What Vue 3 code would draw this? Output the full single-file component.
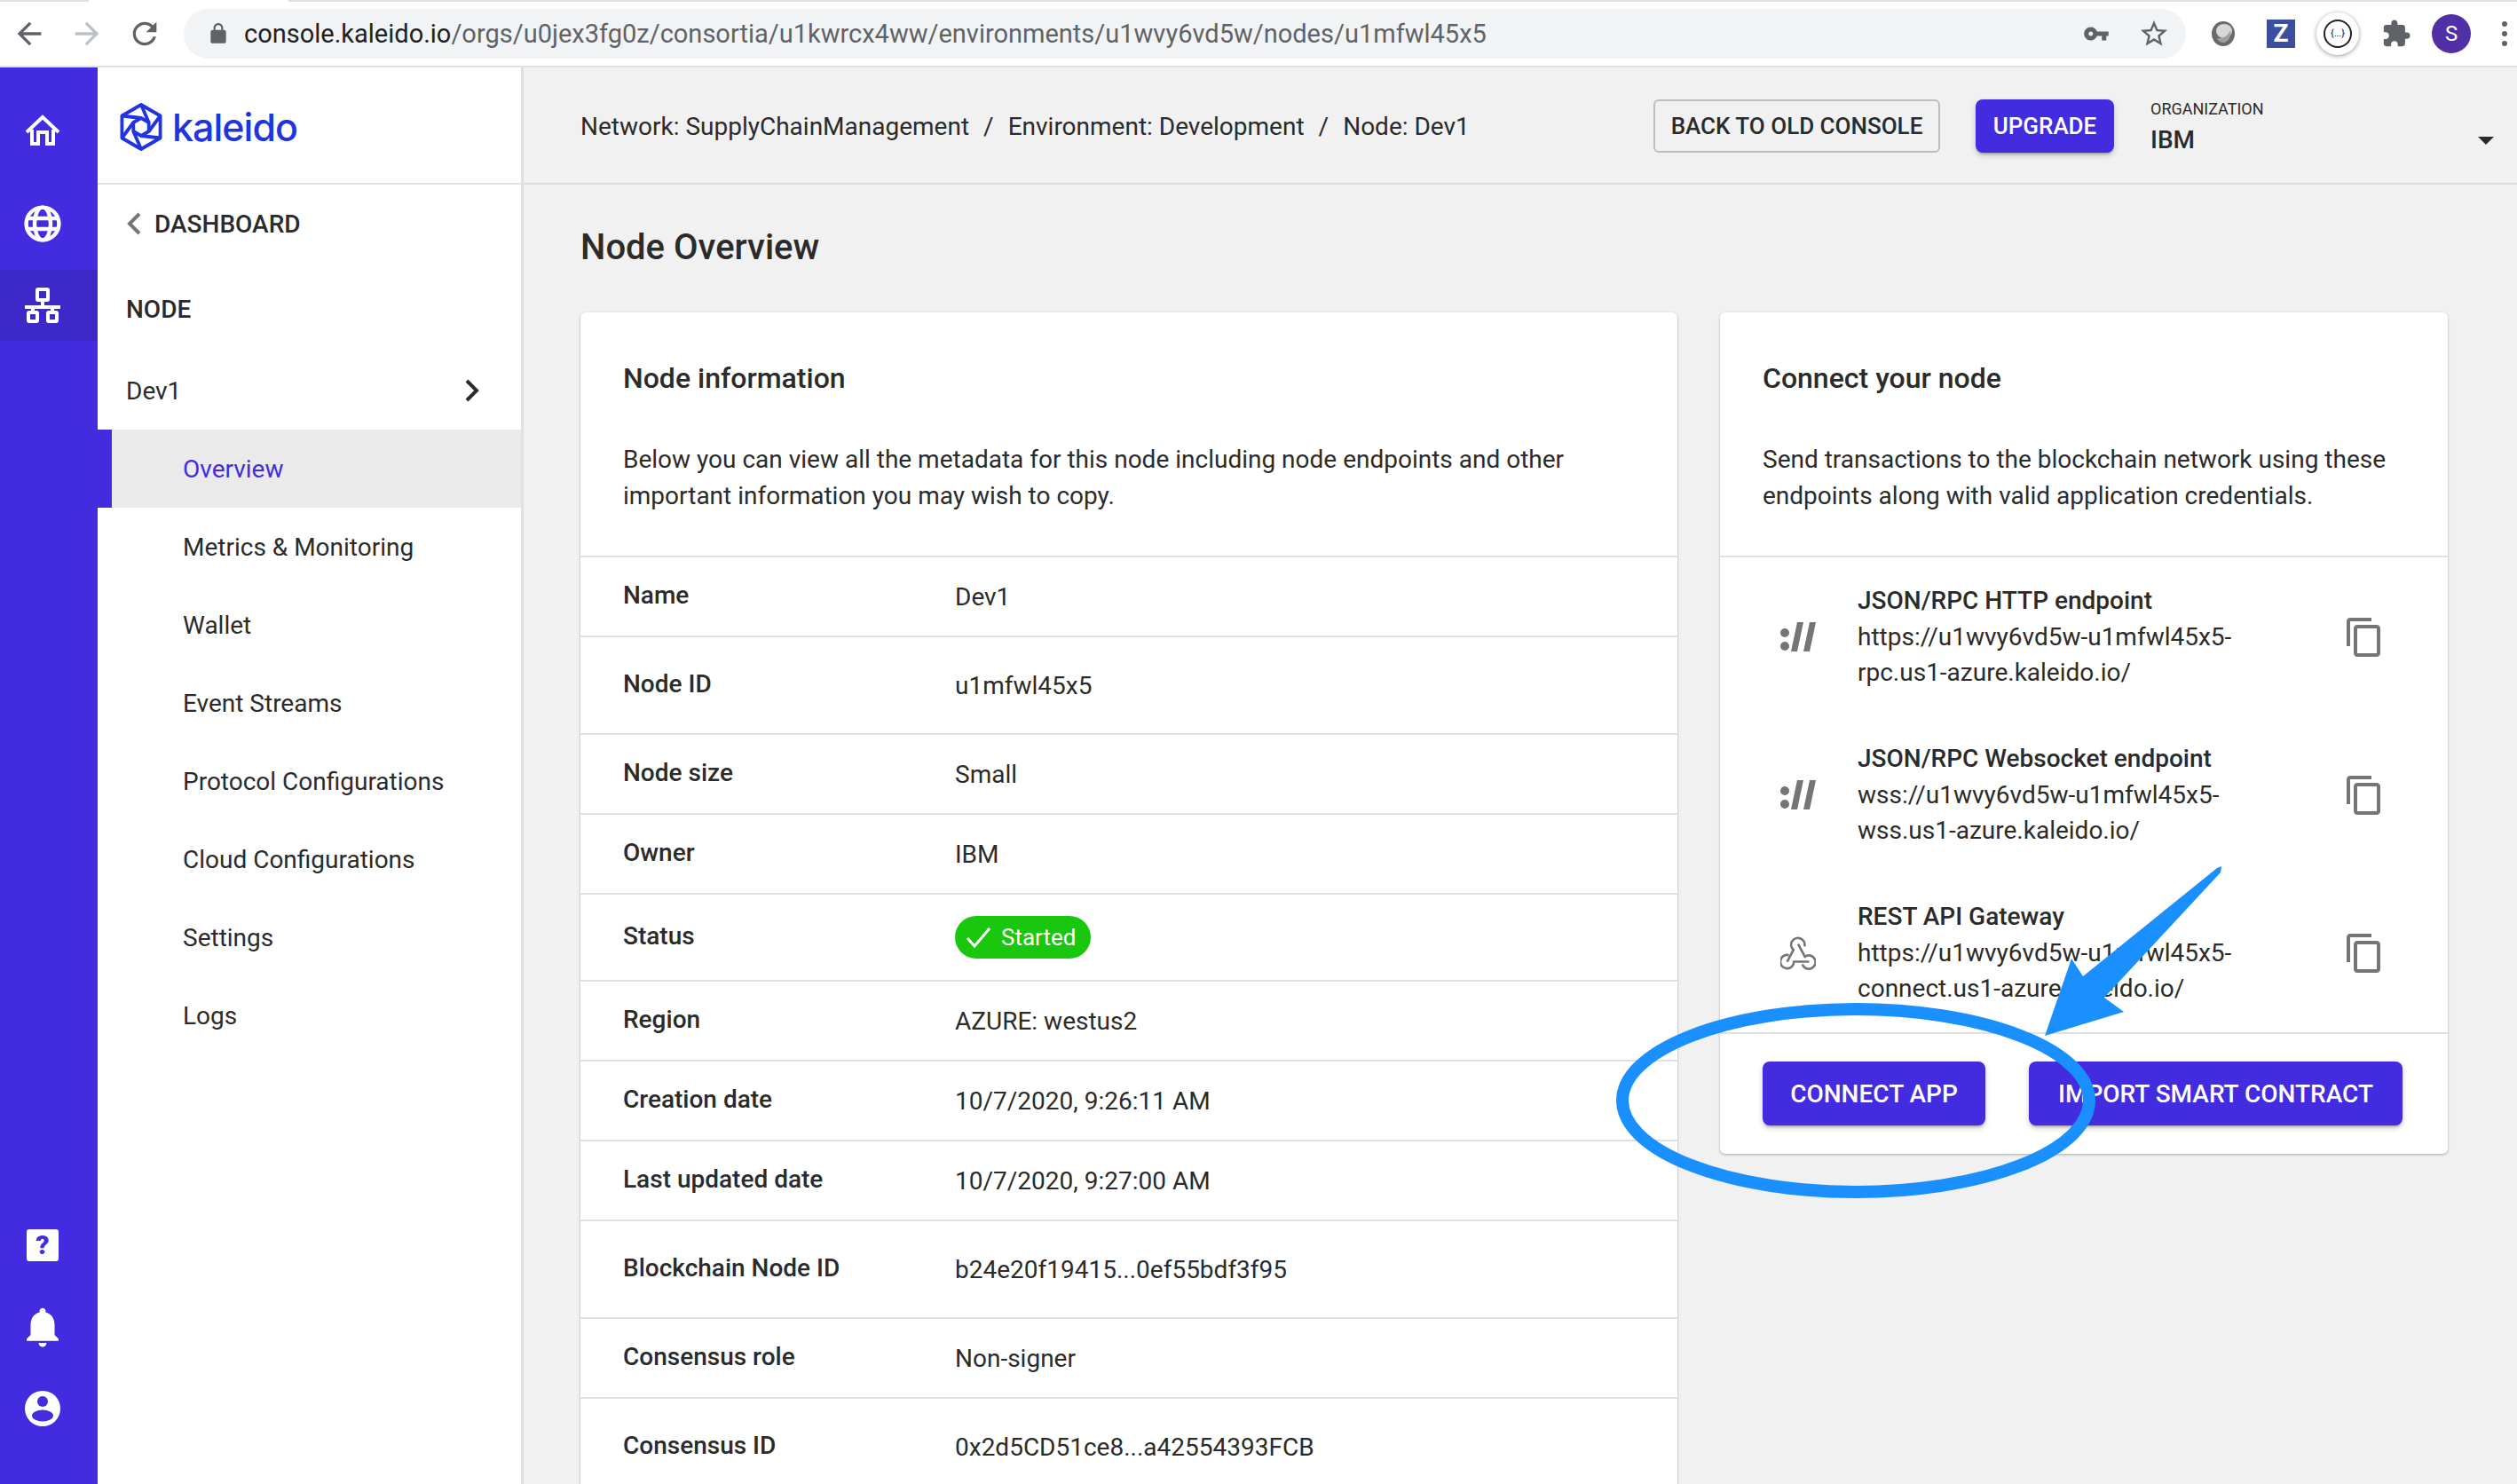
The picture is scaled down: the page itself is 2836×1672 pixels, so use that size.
<template>
  <div class="page">
    <!-- browser toolbar -->
    <div class="chrome">
      <div class="tabline"></div>
      <div class="toolbar">
        <svg class="nav" viewBox="0 0 24 24"><path fill="#5f6368" d="M20 11H7.83l5.59-5.59L12 4l-8 8 8 8 1.41-1.41L7.83 13H20v-2z"/></svg>
        <svg class="nav" viewBox="0 0 24 24"><path fill="#bdc1c6" d="M4 11h12.17l-5.59-5.59L12 4l8 8-8 8-1.41-1.41L16.17 13H4v-2z"/></svg>
        <svg class="nav" viewBox="0 0 24 24"><path fill="#5f6368" d="M17.65 6.35C16.2 4.9 14.21 4 12 4c-4.42 0-7.99 3.58-7.99 8s3.57 8 7.99 8c3.73 0 6.84-2.55 7.73-6h-2.08c-.82 2.33-3.04 4-5.65 4-3.31 0-6-2.69-6-6s2.69-6 6-6c1.66 0 3.14.69 4.22 1.78L13 11h7V4l-2.35 2.35z"/></svg>
        <div class="omnibox">
          <svg class="lock" viewBox="0 0 24 24"><path fill="#5f6368" d="M18 8h-1V6c0-2.76-2.24-5-5-5S7 3.24 7 6v2H6c-1.1 0-2 .9-2 2v10c0 1.1.9 2 2 2h12c1.1 0 2-.9 2-2V10c0-1.1-.9-2-2-2zM9 6c0-1.66 1.34-3 3-3s3 1.34 3 3v2H9V6z"/></svg>
          <span class="url"><b>console.kaleido.io</b>/orgs/u0jex3fg0z/consortia/u1kwrcx4ww/environments/u1wvy6vd5w/nodes/u1mfwl45x5</span>
          <svg class="key" viewBox="0 0 24 24"><path fill="#5f6368" d="M12.65 10C11.83 7.67 9.61 6 7 6c-3.31 0-6 2.69-6 6s2.69 6 6 6c2.61 0 4.83-1.67 5.65-4H17v4h4v-4h2v-4H12.65zM7 14c-1.1 0-2-.9-2-2s.9-2 2-2 2 .9 2 2-.9 2-2 2z"/></svg>
          <svg class="star" viewBox="0 0 24 24"><path fill="#5f6368" d="M22 9.24l-7.19-.62L12 2 9.19 8.63 2 9.24l5.46 4.73L5.82 21 12 17.27 18.18 21l-1.63-7.03L22 9.24zM12 15.4l-3.76 2.27 1-4.28-3.32-2.88 4.38-.38L12 6.1l1.71 4.04 4.38.38-3.32 2.88 1 4.28L12 15.4z"/></svg>
        </div>
        <div class="extensions">
          <svg class="ext-orb" viewBox="0 0 32 32"><ellipse cx="16" cy="16" rx="13" ry="14" fill="#6a6a6a"/><ellipse cx="17" cy="13" rx="9" ry="8" fill="#d8d8d8"/><path fill="#a0a0a0" d="M9 21c6 1 12-2 15-9 2 7-3 14-8 14-3 0-6-2-7-5z"/></svg>
          <div class="ext-z">Z</div>
          <div class="ext-json"><span>{...}</span></div>
          <svg class="ext-puzzle" viewBox="0 0 24 24"><path fill="#5f6368" d="M20.5 11H19V7c0-1.1-.9-2-2-2h-4V3.5C13 2.12 11.88 1 10.5 1S8 2.12 8 3.5V5H4c-1.1 0-1.99.9-1.99 2v3.8H3.5c1.49 0 2.7 1.21 2.7 2.7s-1.21 2.7-2.7 2.7H2V20c0 1.1.9 2 2 2h3.8v-1.5c0-1.49 1.21-2.7 2.7-2.7 1.49 0 2.7 1.21 2.7 2.7V22H17c1.1 0 2-.9 2-2v-4h1.5c1.38 0 2.5-1.12 2.5-2.5S21.88 11 20.5 11z"/></svg>
          <div class="ext-avatar">S</div>
          <div class="ext-dots"><i></i><i></i><i></i></div>
        </div>
      </div>
    </div>

    <div class="app">
      <!-- icon rail -->
      <nav class="rail">
        <div class="rail-group">
          <div class="rail-item home">
            <svg width="40" height="36" viewBox="0 0 40 36" fill="none" stroke="#fff" stroke-width="4"><path d="M2 20 20 3l18 17"/><path d="M8 17v16h7V20h10v13h7V17"/></svg>
          </div>
          <div class="rail-item">
            <svg width="42" height="42" viewBox="0 0 42 42" fill="none" stroke="#fff" stroke-width="4.4"><circle cx="21" cy="21" r="18.4"/><ellipse cx="21" cy="21" rx="9" ry="18.4"/><path d="M3 15h36M3 27h36"/></svg>
          </div>
          <div class="rail-item active">
            <svg width="42" height="42" viewBox="0 0 42 42" fill="none" stroke="#fff" stroke-width="4"><rect x="15" y="3" width="12" height="12" rx="1"/><path d="M21 15v7M1 23h40M10 23v6M32 23v6"/><rect x="5" y="29" width="10" height="10" rx="1"/><rect x="27" y="29" width="10" height="10" rx="1"/></svg>
          </div>
        </div>
        <div class="rail-group">
          <div class="rail-item"><div class="help">?</div></div>
          <div class="rail-item">
            <svg width="54" height="54" viewBox="0 0 24 24"><path fill="#fff" d="M12 22c1.1 0 2-.9 2-2h-4c0 1.1.89 2 2 2zm6-6v-5c0-3.07-1.64-5.64-4.5-6.32V4c0-.83-.67-1.5-1.5-1.5s-1.5.67-1.5 1.5v.68C7.63 5.36 6 7.92 6 11v5l-2 2v1h16v-1l-2-2z"/></svg>
          </div>
          <div class="rail-item">
            <svg width="40" height="40" viewBox="0 0 40 40"><circle cx="20" cy="20" r="20" fill="#fff"/><circle cx="20" cy="12" r="6" fill="#432ce0"/><ellipse cx="20" cy="28" rx="12" ry="6.5" fill="#432ce0"/></svg>
          </div>
        </div>
      </nav>

      <!-- sidebar -->
      <aside class="sidebar">
        <div class="brand">
          <svg width="48" height="54" viewBox="0 0 48 54" fill="none" stroke="#2034e0" stroke-width="3.8" stroke-linejoin="round">
            <path d="M24 2 45.6 14.5v25L24 52 2.4 39.5v-25z"/>
            <path d="M24 17l8.7 5v10L24 37l-8.7-5V22z"/>
            <path d="M24 2l8.700 20M45.600 14.500 32.700 32M45.600 39.500 24 37M24 52l-8.700-20M2.400 39.500 15.300 22M2.400 14.500 24 17"/>
          </svg>
          <span class="brand-name">kaleido</span>
        </div>
        <div class="side-row dash">
          <svg width="18" height="26" viewBox="0 0 18 26" fill="none" stroke="#757575" stroke-width="4"><path d="M15 2 4 13l11 11"/></svg>
          <span>DASHBOARD</span>
        </div>
        <div class="side-row heading">NODE</div>
        <div class="side-row dev">
          <span>Dev1</span>
          <svg width="18" height="26" viewBox="0 0 18 26" fill="none" stroke="#2b2b2b" stroke-width="4"><path d="M3 2l11 11L3 24"/></svg>
        </div>
        <div v-for="item in menu" :key="item" class="menu-item" :class="{ current: item === 'Overview' }">{{ item }}</div>
      </aside>

      <!-- main -->
      <main class="main">
        <header class="topbar">
          <div class="crumbs">
            <span>Network: SupplyChainManagement</span><i>/</i>
            <span>Environment: Development</span><i>/</i>
            <span>Node: Dev1</span>
          </div>
          <button class="btn-outline">BACK TO OLD CONSOLE</button>
          <button class="btn upgrade">UPGRADE</button>
          <div class="org">
            <div class="org-label">ORGANIZATION</div>
            <div class="org-value">IBM</div>
            <div class="caret"></div>
          </div>
        </header>

        <div class="content">
          <h1>Node Overview</h1>
          <div class="cards">
            <section class="card left">
              <div class="card-head">
                <h2>Node information</h2>
                <p>Below you can view all the metadata for this node including node endpoints and other important information you may wish to copy.</p>
              </div>
              <div v-for="row in rows" :key="row.label" class="row" :class="{ tall: row.tall }">
                <div class="row-label">{{ row.label }}</div>
                <div class="row-value">
                  <span v-if="row.label === 'Status'" class="pill">
                    <svg width="30" height="26" viewBox="0 0 30 26" fill="none" stroke="#fff" stroke-width="3"><path d="M2 14l8 9L27 3"/></svg>
                    {{ row.value }}
                  </span>
                  <template v-else>{{ row.value }}</template>
                </div>
              </div>
            </section>

            <section class="card right">
              <div class="card-head">
                <h2>Connect your node</h2>
                <p>Send transactions to the blockchain network using these endpoints along with valid application credentials.</p>
              </div>
              <div class="endpoints">
                <div v-for="ep in endpoints" :key="ep.title" class="endpoint">
                  <div class="ep-icon">
                    <svg v-if="ep.kind === 'rpc'" width="40" height="34" viewBox="0 0 40 34" fill="#757575"><circle cx="5" cy="12" r="5"/><circle cx="5" cy="27" r="5"/><path d="M19 0h7l-7 33h-7zM33 0h7l-7 33h-7z"/></svg>
                    <svg v-else width="42" height="40" viewBox="0 0 42 40" fill="none" stroke="#757575" stroke-width="2.8">
                      <path d="M8 30 15.500 16A8 8 0 1 1 28.500 12"/>
                      <path d="M21 9 29 24A8 8 0 1 1 26 33"/>
                      <path d="M34 30H16A8 8 0 1 1 10 22.300"/>
                    </svg>
                  </div>
                  <div class="ep-text">
                    <div class="ep-title">{{ ep.title }}</div>
                    <div class="ep-url">{{ ep.url }}</div>
                    <div class="ep-url">{{ ep.url2 }}</div>
                  </div>
                  <svg class="copy" viewBox="0 0 24 24"><path fill="#757575" d="M16 1H4c-1.1 0-2 .9-2 2v14h2V3h12V1zm3 4H8c-1.1 0-2 .9-2 2v14c0 1.1.9 2 2 2h11c1.1 0 2-.9 2-2V7c0-1.1-.9-2-2-2zm0 16H8V7h11v14z"/></svg>
                </div>
              </div>
              <div class="actions">
                <button class="btn connect">CONNECT APP</button>
                <button class="btn import">IMPORT SMART CONTRACT</button>
              </div>
            </section>
          </div>
        </div>
      </main>
    </div>

    <!-- hand drawn annotation on top of the screenshot -->
    <svg class="annotation" viewBox="0 0 2836 1672">
      <path fill="#1a90ff" d="M2498 978 2347 1100 2334 1080 2304 1167 2393 1140 2371 1124 2502 983 2503 976z"/>
      <ellipse cx="2091" cy="1240" rx="263" ry="103" fill="none" stroke="#1a90ff" stroke-width="14"/>
    </svg>
  </div>
</template>

<script setup>
const menu = [
  'Overview',
  'Metrics & Monitoring',
  'Wallet',
  'Event Streams',
  'Protocol Configurations',
  'Cloud Configurations',
  'Settings',
  'Logs'
]

const rows = [
  { label: 'Name', value: 'Dev1' },
  { label: 'Node ID', value: 'u1mfwl45x5', tall: true },
  { label: 'Node size', value: 'Small' },
  { label: 'Owner', value: 'IBM' },
  { label: 'Status', value: 'Started' },
  { label: 'Region', value: 'AZURE: westus2' },
  { label: 'Creation date', value: '10/7/2020, 9:26:11 AM' },
  { label: 'Last updated date', value: '10/7/2020, 9:27:00 AM' },
  { label: 'Blockchain Node ID', value: 'b24e20f19415...0ef55bdf3f95', tall: true },
  { label: 'Consensus role', value: 'Non-signer' },
  { label: 'Consensus ID', value: '0x2d5CD51ce8...a42554393FCB', tall: true }
]

const endpoints = [
  { kind: 'rpc', title: 'JSON/RPC HTTP endpoint', url: 'https://u1wvy6vd5w-u1mfwl45x5-', url2: 'rpc.us1-azure.kaleido.io/' },
  { kind: 'rpc', title: 'JSON/RPC Websocket endpoint', url: 'wss://u1wvy6vd5w-u1mfwl45x5-', url2: 'wss.us1-azure.kaleido.io/' },
  { kind: 'rest', title: 'REST API Gateway', url: 'https://u1wvy6vd5w-u1mfwl45x5-', url2: 'connect.us1-azure.kaleido.io/' }
]
</script>

<style>
html, body {
  margin: 0;
  overflow: hidden;
}
</style>

<style scoped>
.page {
  position: relative;
  width: 2836px;
  height: 1672px;
  overflow: hidden;
  font-family: Roboto, "Liberation Sans", sans-serif;
  color: #2b2b2b;
  background: #f1f1f1;
}
.chrome {
  height: 76px;
  background: #fff;
  border-bottom: 2px solid #dee1e6;
  box-sizing: border-box;
}
.tabline {
  height: 2px;
  background: linear-gradient(90deg, #dee1e6 100px, #fff 100px, #fff 325px, #dee1e6 325px);
}
.toolbar {
  display: flex;
  align-items: center;
  height: 72px;
  padding: 0 0 0 13px;
}
.nav {
  width: 40px;
  height: 40px;
  margin-right: 25px;
}
.omnibox {
  display: flex;
  align-items: center;
  width: 2256px;
  height: 56px;
  margin-left: -1px;
  padding: 0 18px 0 26px;
  box-sizing: border-box;
  border-radius: 28px;
  background: #f1f3f4;
}
.lock {
  width: 26px;
  height: 26px;
  margin-right: 16px;
}
.url {
  flex: 1;
  font-size: 29px;
  color: #5f6368;
  white-space: nowrap;
}
.url b {
  font-weight: 400;
  color: #202124;
}
.key {
  width: 30px;
  height: 30px;
  margin-right: 32px;
}
.star {
  width: 36px;
  height: 36px;
}
.extensions {
  display: flex;
  align-items: center;
  flex: 1;
  padding-left: 26px;
}
.ext-orb {
  width: 32px;
  height: 32px;
}
.ext-z {
  width: 32px;
  height: 32px;
  margin-left: 33px;
  background: #3c4f9e;
  color: #fff;
  font-weight: 700;
  font-size: 28px;
  line-height: 32px;
  text-align: center;
}
.ext-json {
  display: flex;
  align-items: center;
  justify-content: center;
  width: 48px;
  height: 48px;
  margin-left: 24px;
  border-radius: 50%;
  background: #fff;
  box-shadow: 0 1px 5px rgba(0, 0, 0, 0.4);
}
.ext-json span {
  display: block;
  width: 32px;
  height: 32px;
  border: 2px solid #222;
  border-radius: 50%;
  box-sizing: border-box;
  font-size: 11px;
  line-height: 28px;
  text-align: center;
  color: #222;
}
.ext-puzzle {
  width: 34px;
  height: 34px;
  margin-left: 25px;
}
.ext-avatar {
  width: 44px;
  height: 44px;
  margin-left: 23px;
  border-radius: 50%;
  background: #5130a5;
  color: #fff;
  font-size: 24px;
  line-height: 44px;
  text-align: center;
}
.ext-dots {
  display: flex;
  flex-direction: column;
  gap: 5px;
  margin-left: 35px;
}
.ext-dots i {
  width: 6px;
  height: 6px;
  border-radius: 50%;
  background: #5f6368;
}

.app {
  display: flex;
  height: 1596px;
}
.rail {
  display: flex;
  flex-direction: column;
  justify-content: space-between;
  width: 110px;
  padding: 25px 0 39px;
  box-sizing: border-box;
  background: #432ce0;
}
.rail-item {
  display: flex;
  align-items: center;
  justify-content: center;
  height: 92px;
  padding-right: 14px;
}
.rail-item.home {
  margin-bottom: 13px;
}
.rail-item.active {
  position: relative;
  z-index: 0;
}
.rail-item.active::before {
  content: "";
  position: absolute;
  z-index: -1;
  left: 0;
  right: 0;
  top: 6px;
  height: 80px;
  background: #3d28c8;
}
.help {
  width: 36px;
  height: 36px;
  border-radius: 3px;
  background: #fff;
  color: #432ce0;
  font-weight: 900;
  font-size: 30px;
  line-height: 36px;
  text-align: center;
}

.sidebar {
  width: 480px;
  flex-shrink: 0;
  background: #fff;
  border-right: 3px solid #e0e0e0;
  box-sizing: border-box;
}
.brand {
  display: flex;
  align-items: center;
  gap: 11px;
  height: 132px;
  padding: 4px 0 0 25px;
  box-sizing: border-box;
  border-bottom: 2px solid #e0e0e0;
}
.brand-name {
  font-family: Inter, Lato, sans-serif;
  font-size: 43px;
  font-weight: 500;
  letter-spacing: -1px;
  color: #2034e0;
}
.side-row {
  display: flex;
  align-items: center;
  height: 88px;
  padding: 0 46px 0 32px;
  font-size: 28px;
}
.dash {
  gap: 14px;
  font-weight: 500;
}
.heading {
  font-weight: 500;
  height: 96px;
  margin-top: 4px;
}
.dev {
  justify-content: space-between;
  height: 88px;
}
.menu-item {
  display: flex;
  align-items: center;
  height: 88px;
  padding-left: 96px;
  font-size: 28px;
}
.menu-item.current {
  padding-left: 80px;
  background: #eaeaea;
  border-left: 16px solid #432ce0;
  color: #432ce0;
}

.main {
  flex: 1;
  min-width: 0;
}
.topbar {
  display: flex;
  align-items: center;
  height: 132px;
  padding: 2px 0 0 64px;
  box-sizing: border-box;
  border-bottom: 2px solid #dcdcdc;
}
.crumbs {
  flex: 1;
  display: flex;
  gap: 16px;
  font-size: 28px;
}
.crumbs i {
  font-style: normal;
}
.btn-outline {
  width: 323px;
  height: 60px;
  padding: 0;
  background: transparent;
  border: 2px solid #bdbdbd;
  border-radius: 6px;
  font: 500 26px Roboto, sans-serif;
  color: #2b2b2b;
}
.btn {
  border: 0;
  border-radius: 8px;
  padding: 0;
  background: #432ce0;
  color: #fff;
  font: 500 28px Roboto, sans-serif;
  box-shadow: 0 3px 3px -2px rgba(0, 0, 0, 0.3), 0 3px 6px rgba(0, 0, 0, 0.2);
}
.btn.upgrade {
  width: 156px;
  height: 60px;
  margin-left: 40px;
  font-size: 26px;
}
.org {
  position: relative;
  width: 413px;
  height: 80px;
  margin-left: 41px;
  padding-top: 9px;
  box-sizing: border-box;
}
.org-label {
  font-size: 18px;
  line-height: 24px;
}
.org-value {
  margin-top: 5px;
  font-size: 28px;
  font-weight: 500;
  line-height: 36px;
}
.caret {
  position: absolute;
  left: 369px;
  top: 52px;
  border-left: 9px solid transparent;
  border-right: 9px solid transparent;
  border-top: 9px solid #2b2b2b;
}

.content {
  padding: 0 64px;
}
h1 {
  margin: 0;
  height: 144px;
  font-size: 40px;
  font-weight: 500;
  line-height: 141px;
}
.cards {
  display: flex;
  align-items: flex-start;
  gap: 48px;
}
.card {
  background: #fff;
  border-radius: 6px;
  box-shadow: 0 1px 3px rgba(0, 0, 0, 0.3);
}
.card.left {
  width: 1236px;
}
.card.right {
  width: 820px;
}
.card-head {
  padding: 54px 48px 47px;
}
h2 {
  margin: 0 0 52px;
  font-size: 32px;
  font-weight: 500;
  line-height: 40px;
}
p {
  margin: 0;
  font-size: 28px;
  line-height: 40.5px;
}
.row {
  display: flex;
  align-items: center;
  min-height: 88px;
  padding: 0 48px;
  border-top: 2px solid #e0e0e0;
  font-size: 28px;
}
.row.tall {
  min-height: 108px;
}
.row-label {
  width: 374px;
  margin-bottom: 3px;
  font-weight: 500;
}
.pill {
  display: inline-flex;
  align-items: center;
  gap: 10px;
  height: 48px;
  margin: 24px 0;
  padding: 0 16px 0 12px;
  border-radius: 24px;
  background: #19c70f;
  color: #fff;
  font-size: 26px;
}
.endpoints {
  display: flex;
  flex-direction: column;
  gap: 57px;
  padding: 29px 0;
  border-top: 2px solid #e0e0e0;
}
.endpoint {
  display: flex;
  align-items: center;
  padding-left: 68px;
}
.ep-icon {
  display: flex;
  justify-content: center;
  width: 40px;
  margin-right: 47px;
}
.ep-text {
  width: 547px;
  font-size: 28px;
  line-height: 40px;
}
.ep-title {
  margin-bottom: 1px;
  font-weight: 500;
}
.copy {
  width: 48px;
  height: 48px;
}
.actions {
  display: flex;
  gap: 49px;
  padding: 31px 48px 32px;
  border-top: 2px solid #e0e0e0;
}
.connect {
  width: 251px;
  height: 72px;
}
.import {
  width: 421px;
  height: 72px;
}
.annotation {
  position: absolute;
  left: 0;
  top: 0;
  width: 2836px;
  height: 1672px;
  pointer-events: none;
}
</style>
